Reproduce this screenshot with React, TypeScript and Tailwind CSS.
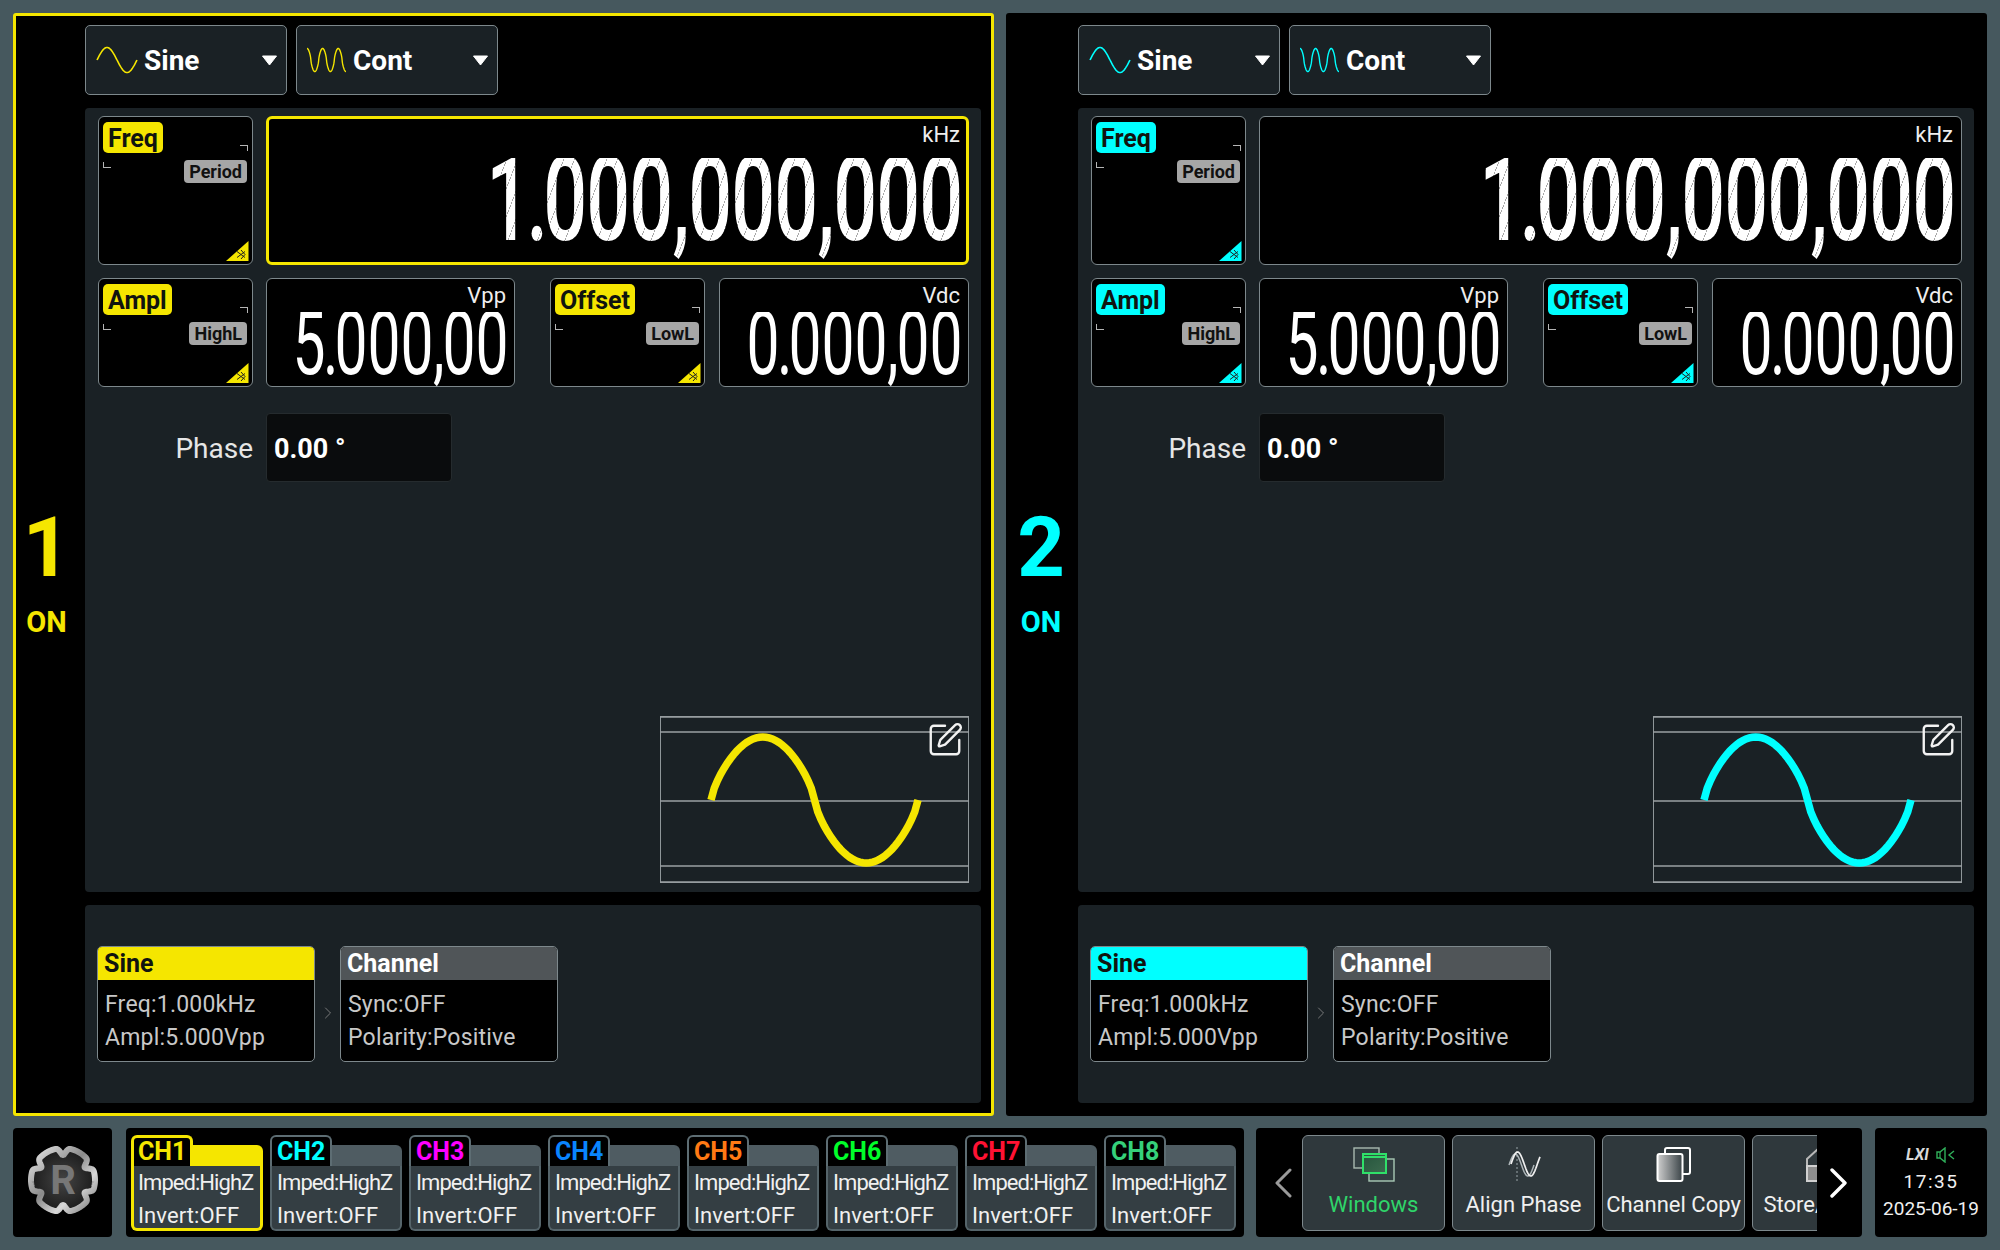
import { SquarePen, ChevronRight } from 'lucide-react'

const yellow = {
  hex: '#f5e600',
  text: 'text-[#f5e600]',
  bg: 'bg-[#f5e600]',
  panel: 'border-[#f5e600]',
  rail: 'pr-[8px]',
  active: 'border-[3px] border-[#f5e600] pt-[3px] pr-[3px]',
}
const cyan = {
  hex: '#00ffff',
  text: 'text-[#00ffff]',
  bg: 'bg-[#00ffff]',
  panel: 'border-black',
  rail: 'pr-[5px]',
  active: 'border border-[#7d888c] pt-[5px] pr-[5px]',
}
type Tone = typeof yellow

const channels = [
  { name: 'CH1', text: 'text-[#f5e600]' },
  { name: 'CH2', text: 'text-[#00ffff]' },
  { name: 'CH3', text: 'text-[#ff00ff]' },
  { name: 'CH4', text: 'text-[#0a84ff]' },
  { name: 'CH5', text: 'text-[#ff7a14]' },
  { name: 'CH6', text: 'text-[#00ff2a]' },
  { name: 'CH7', text: 'text-[#ff1233]' },
  { name: 'CH8', text: 'text-[#35d07a]' },
]

// pow < 1 pushes the curve towards steeper flanks, like the instrument's drawn wave
function sinePath(x0: number, w: number, cy: number, amp: number, cycles = 1, phase = 0, pow = 1) {
  const pts: string[] = []
  const n = Math.round(64 * cycles)
  for (let i = 0; i <= n; i++) {
    const t = i / n
    const s = Math.sin(t * cycles * Math.PI * 2 + phase)
    const y = cy - amp * Math.sign(s) * Math.pow(Math.abs(s), pow)
    pts.push(`${(x0 + t * w).toFixed(2)} ${y.toFixed(2)}`)
  }
  return 'M' + pts.join('L')
}

function Caret() {
  return (
    <svg width="17" height="11" viewBox="0 0 17 11" className="shrink-0">
      <path d="M1.5 1 H15.5 L8.5 10 Z" fill="#fff" stroke="#fff" strokeLinejoin="round" />
    </svg>
  )
}

function Dropdown({ label, tone, cont }: { label: string; tone: Tone; cont?: boolean }) {
  return (
    <div className={`w-[202px] h-[70px] rounded-[5px] border border-[#7d888c] bg-[#1a2125] flex items-center pr-[8px] ${cont ? 'pl-[9px]' : 'pl-[10px]'}`}>
      <svg width="42" height="28" viewBox="0 0 42 28" className="shrink-0">
        <path
          d={cont ? sinePath(1, 39, 14, 11.5, 2.5, Math.PI / 2, 0.7) : sinePath(1, 40, 14, 12.5)}
          fill="none"
          stroke={tone.hex}
          strokeWidth={cont ? 1.4 : 1.6}
        />
      </svg>
      <span className={`pt-[2px] text-[28px] font-bold leading-none text-white ${cont ? 'ml-[5px]' : 'ml-[6px]'}`}>{label}</span>
      <span className="ml-auto"><Caret /></span>
    </div>
  )
}

function Glyphs({ text, big }: { text: string; big?: boolean }) {
  return (
    <div className="flex justify-end">
      {text.split('').map((ch, i) => {
        const narrow = ch === ',' || ch === '.'
        const cell = big ? (ch === ',' ? 'w-[16px]' : ch === '.' ? 'w-[14px]' : 'w-[43px]') : narrow ? 'w-[9px]' : 'w-[33px]'
        return (
          <span key={i} className={`flex justify-center items-start ${big ? 'h-[84px]' : 'h-[64px]'} ${cell}`}>
            <span
              className={`shrink-0 bg-clip-text text-transparent ${
                big
                  ? 'h-[110px] text-[117px] font-medium leading-[84px] scale-x-[0.66] bg-[repeating-linear-gradient(120deg,#ffffff_0,#ffffff_13px,#a8a8a8_13px,#a8a8a8_14px)]'
                  : 'h-[84px] text-[89px] font-normal leading-[64px] scale-x-[0.66] bg-[repeating-linear-gradient(90deg,#ffffff_0,#ffffff_22px,#b0b0b0_22px,#b0b0b0_23px)]'
              }`}
            >
              {ch}
            </span>
          </span>
        )
      })}
    </div>
  )
}

function ParamBox({ tone, main, alt, className }: { tone: Tone; main: string; alt: string; className: string }) {
  return (
    <div className={`relative shrink-0 w-[155px] rounded-[6px] border border-[#7d888c] bg-black flex flex-col pt-[5px] pl-[4px] pr-[5px] ${className}`}>
      <span className={`self-start h-[31px] px-[5px] rounded-[5px] text-[25px] font-bold leading-[33px] text-[#10140f] ${tone.bg}`}>{main}</span>
      <span className="self-end mt-[7px] h-[23px] px-[5px] rounded-[4px] bg-[#a6a6a6] text-[18px] font-bold leading-[23px] text-[#111]">{alt}</span>
      <span className="absolute right-[4px] top-[28px] w-[8px] h-[6px] border-t border-r border-[#b5b5b5]" />
      <span className="absolute left-[4px] top-[45px] w-[8px] h-[6px] border-l border-b border-[#b5b5b5]" />
      <svg width="23" height="20" viewBox="0 0 23 20" className="absolute right-[3px] bottom-[3px]">
        <path d="M0 20 L22.5 0 V20 Z" fill={tone.hex} />
        <path d="M11 10.5 L19 16.5 M11 16.5 L19 10.5 M15 9 L19 13.5 L15 18" stroke="#222" strokeWidth="1" fill="none" />
      </svg>
    </div>
  )
}

function ValueBox({ value, unit, active, tone, big, className }: { value: string; unit: string; active?: boolean; tone: Tone; big?: boolean; className: string }) {
  return (
    <div
      className={`rounded-[6px] bg-black flex flex-col ${big ? (active ? tone.active : 'border border-[#7d888c] pt-[5px] pr-[5px]') : 'border border-[#7d888c] pt-[4px] pr-[5px]'} ${className}`}
    >
      <span className={`self-end mr-[3px] text-[22px] leading-[26px] text-[#eeeeee] ${big ? '' : 'mb-[3px]'}`}>{unit}</span>
      <div className={big ? 'mt-[10px]' : ''}>
        <Glyphs text={value} big={big} />
      </div>
    </div>
  )
}

function Preview({ tone }: { tone: Tone }) {
  return (
    <div className="relative self-end mt-auto mb-[9px] w-[309px] h-[167px]">
      <svg width="309" height="167" viewBox="0 0 309 167" className="block">
        <rect x="0.5" y="0.5" width="308" height="166" fill="none" stroke="#8e9699" strokeWidth="1" />
        <path d="M0 1H309 M0 16H309 M0 85H309 M0 150H309 M0 166H309" stroke="#9aa0a2" strokeWidth="1.6" />
        <path d={sinePath(51, 207, 84, 63, 1, 0, 0.72)} fill="none" stroke={tone.hex} strokeWidth="7.5" />
      </svg>
      <SquarePen size={38} strokeWidth={1.5} color="#f2f2f2" className="absolute right-[5px] top-[5px]" />
    </div>
  )
}

function ParamCard({ title, lines, tone, alt }: { title: string; lines: string[]; tone?: Tone; alt?: boolean }) {
  return (
    <div className="w-[218px] h-[116px] rounded-[5px] border border-[#7d888c] bg-black overflow-hidden">
      <div className={`h-[33px] px-[6px] text-[25px] font-bold leading-[33px] ${alt ? 'bg-[#505558] text-white' : `${tone?.bg} text-[#10140f]`}`}>{title}</div>
      <div className="pl-[7px] pt-[8px] text-[23px] leading-[33px] tracking-[0.2px] text-[#c8c8c8]">
        {lines.map((l) => (
          <div key={l}>{l}</div>
        ))}
      </div>
    </div>
  )
}

function ChannelPanel({ num, tone, active, className }: { num: string; tone: Tone; active?: boolean; className: string }) {
  return (
    <div className={`h-[1103px] bg-black rounded-[3px] border-[3px] flex ${tone.panel} ${className}`}>
      <div className={`w-[69px] shrink-0 flex flex-col items-center pt-[502px] ${tone.rail}`}>
        <span className={`text-[83px] font-bold leading-[60px] ${tone.text}`}>{num}</span>
        <span className={`mt-[34px] text-[29px] font-bold leading-[20px] ${tone.text}`}>ON</span>
      </div>
      <div className="flex-1 min-w-0 flex flex-col pt-[9px] pr-[10px] pb-[10px]">
        <div className="flex gap-[9px] h-[70px]">
          <Dropdown label="Sine" tone={tone} />
          <Dropdown label="Cont" tone={tone} cont />
        </div>
        <div className="mt-[13px] h-[784px] rounded-[4px] bg-[#1a2125] flex flex-col pt-[8px] pl-[13px] pr-[12px]">
          <div className="flex gap-[13px] h-[149px]">
            <ParamBox tone={tone} main="Freq" alt="Period" className="h-[149px]" />
            <ValueBox value="1.000,000,000" unit="kHz" active={active} tone={tone} big className="flex-1" />
          </div>
          <div className="mt-[13px] flex h-[109px]">
            <ParamBox tone={tone} main="Ampl" alt="HighL" className="h-[109px]" />
            <ValueBox value="5.000,00" unit="Vpp" tone={tone} className="ml-[13px] w-[249px]" />
            <ParamBox tone={tone} main="Offset" alt="LowL" className="ml-[35px] h-[109px]" />
            <ValueBox value="0.000,00" unit="Vdc" tone={tone} className="ml-[14px] flex-1" />
          </div>
          <div className="mt-[26px] flex items-center h-[69px]">
            <span className="w-[155px] pt-[3px] text-right text-[28px] text-[#e6e6e6]">Phase</span>
            <div className="ml-[13px] w-[186px] h-[69px] rounded-[4px] bg-[#0a0c0d] border border-[#252b2e] flex items-center pl-[7px] pt-[3px] text-[27px] font-bold text-white">
              0.00 °
            </div>
          </div>
          <Preview tone={tone} />
        </div>
        <div className="mt-[13px] flex-1 rounded-[4px] bg-[#1a2125] flex items-start pl-[12px] pt-[41px]">
          <ParamCard title="Sine" lines={['Freq:1.000kHz', 'Ampl:5.000Vpp']} tone={tone} />
          <span className="w-[25px] h-[116px] flex items-center justify-center pt-[18px]">
            <ChevronRight size={20} strokeWidth={1} color="#8a8a8a" />
          </span>
          <ParamCard title="Channel" lines={['Sync:OFF', 'Polarity:Positive']} alt />
        </div>
      </div>
    </div>
  )
}

function ChannelTab({ name, text, selected }: { name: string; text: string; selected?: boolean }) {
  return (
    <div className="w-[132px] h-[96px] flex flex-col shrink-0">
      <div className="h-[31px] flex">
        <div
          className={`w-[62px] h-[31px] rounded-t-[6px] bg-black border-b-0 text-[25px] font-bold leading-[28px] ${text} ${
            selected ? 'border-[3px] border-[#f5e600] pl-[4px]' : 'border-2 border-[#5d6d73] pl-[5px] pt-px'
          }`}
        >
          {name}
        </div>
        <div className={`flex-1 mt-[10px] rounded-tr-[6px] ${selected ? 'bg-[#f5e600]' : 'bg-[#4f5c62]'}`} />
      </div>
      <div
        className={`h-[65px] rounded-b-[6px] bg-[#343e43] text-[22px] leading-[33px] text-[#f0f0f0] ${
          selected ? 'border-x-[3px] border-b-[3px] border-[#f5e600] pl-[4px]' : 'border-x-2 border-b-2 border-[#55646a] pl-[5px]'
        }`}
      >
        <div className="tracking-[-0.95px]">Imped:HighZ</div>
        <div className="tracking-[0.1px]">Invert:OFF</div>
      </div>
    </div>
  )
}

function Logo() {
  const pts: string[] = []
  const cx = 50
  const cy = 52
  const steps = 240
  for (let i = 0; i < steps; i++) {
    const a = (i / steps) * Math.PI * 2
    // six lobes, notches at 0, 60, 120... degrees
    const r = 32 - 7 * Math.pow(Math.max(0, Math.cos(a * 6)), 3)
    pts.push(`${(cx + r * Math.sin(a)).toFixed(2)} ${(cy - r * Math.cos(a)).toFixed(2)}`)
  }
  return (
    <svg width="99" height="109" viewBox="0 0 99 109">
      <defs>
        <linearGradient id="metal" x1="0" y1="0" x2="1" y2="1">
          <stop offset="0" stopColor="#e8e8e8" />
          <stop offset="0.45" stopColor="#8a8a8a" />
          <stop offset="0.7" stopColor="#d8d8d8" />
          <stop offset="1" stopColor="#777" />
        </linearGradient>
        <radialGradient id="core" cx="0.5" cy="0.5" r="0.6">
          <stop offset="0" stopColor="#444" />
          <stop offset="1" stopColor="#141414" />
        </radialGradient>
      </defs>
      <path d={'M' + pts.join('L') + 'Z'} fill="url(#core)" stroke="url(#metal)" strokeWidth="6" strokeLinejoin="round" />
      <text x="50" y="66" textAnchor="middle" fontFamily="Roboto" fontSize="40" fontWeight="700" fill="#777">R</text>
    </svg>
  )
}

function WindowsIcon() {
  return (
    <svg width="42" height="36" viewBox="0 0 42 36">
      <defs>
        <linearGradient id="win" x1="0" y1="0" x2="1" y2="1">
          <stop offset="0" stopColor="#26543c" />
          <stop offset="1" stopColor="#3c6b4f" />
        </linearGradient>
      </defs>
      <rect x="1" y="1" width="25" height="20" fill="#333f42" stroke="#a9b9b0" strokeWidth="1.4" />
      <rect x="16" y="12" width="25" height="22" fill="#333f42" stroke="#a9c9b5" strokeWidth="1.4" />
      <rect x="10" y="7" width="23" height="19" fill="url(#win)" stroke="#2fe069" strokeWidth="2" />
      <path d="M10 10H33" stroke="#2fe069" strokeWidth="2" />
    </svg>
  )
}

function PhaseIcon() {
  return (
    <svg width="36" height="36" viewBox="0 0 36 36">
      <path d="M11 0V36" stroke="#9aa4a8" strokeWidth="1" strokeDasharray="2 2" />
      <path d={sinePath(3, 25, 18, 11, 1)} fill="none" stroke="#aeb6b9" strokeWidth="1.5" />
      <path d={sinePath(5, 29, 17, 12, 1.1)} fill="none" stroke="#f0f0f0" strokeWidth="1.7" />
    </svg>
  )
}

function CopyIcon() {
  return (
    <svg width="36" height="36" viewBox="0 0 36 36">
      <defs>
        <linearGradient id="copy" x1="0" y1="0" x2="1" y2="0">
          <stop offset="0" stopColor="#cfcfcf" />
          <stop offset="1" stopColor="#3a4347" />
        </linearGradient>
      </defs>
      <rect x="9" y="1" width="25" height="26" rx="2" fill="#2f383c" stroke="#fff" strokeWidth="2" />
      <rect x="1.5" y="7" width="25" height="27" rx="2" fill="url(#copy)" stroke="#fff" strokeWidth="2" />
    </svg>
  )
}

function StoreIcon() {
  return (
    <svg width="36" height="36" viewBox="0 0 36 36">
      <path d="M1 34V12L13 1H24L35 12V34Z" fill="#2f383c" stroke="#b8b8b8" strokeWidth="2" />
      <path d="M1 19H35V34H1Z" fill="#8d8d8d" stroke="#d0d0d0" strokeWidth="2" />
    </svg>
  )
}

function ToolButton({ label, icon, green }: { label: string; icon: React.ReactNode; green?: boolean }) {
  return (
    <div className="w-[143px] h-[96px] shrink-0 rounded-[6px] border border-[#7d888c] bg-[#2f383c] flex flex-col items-center pt-[11px]">
      <div className="h-[36px] flex items-center justify-center">{icon}</div>
      <span className={`mt-[9px] text-[22px] leading-[26px] whitespace-nowrap ${green ? 'text-[#2fd56a]' : 'text-[#f0f0f0]'}`}>{label}</span>
    </div>
  )
}

export default function App() {
  return (
    <div className="w-[2000px] h-[1250px] overflow-hidden bg-[#46585e] p-[13px] font-['Roboto',sans-serif]">
      <div className="flex gap-[12px]">
        <ChannelPanel num="1" tone={yellow} active className="w-[981px] shrink-0" />
        <ChannelPanel num="2" tone={cyan} className="flex-1 min-w-0" />
      </div>

      <div className="mt-[12px] flex h-[109px]">
        <div className="w-[99px] rounded-[4px] bg-black">
          <Logo />
        </div>
        <div className="ml-[14px] w-[1118px] rounded-[4px] bg-black flex gap-[7px] pl-[5px] pt-[7px]">
          {channels.map((c, i) => (
            <ChannelTab key={c.name} name={c.name} text={c.text} selected={i === 0} />
          ))}
        </div>
        <div className="ml-[12px] w-[606px] rounded-[4px] bg-black flex items-center">
          <div className="w-[46px] flex justify-center pl-[8px]">
            <svg width="18" height="30" viewBox="0 0 18 30">
              <path d="M16 2 L3 15 L16 28" fill="none" stroke="#9a9a9a" strokeWidth="3" strokeLinecap="round" strokeLinejoin="round" />
            </svg>
          </div>
          <div className="w-[515px] overflow-hidden flex gap-[7px]">
            <ToolButton label="Windows" icon={<WindowsIcon />} green />
            <ToolButton label="Align Phase" icon={<PhaseIcon />} />
            <ToolButton label="Channel Copy" icon={<CopyIcon />} />
            <ToolButton label="Store/Recall" icon={<StoreIcon />} />
          </div>
          <div className="flex-1 flex justify-center pr-[2px]">
            <svg width="18" height="30" viewBox="0 0 18 30">
              <path d="M2 2 L15 15 L2 28" fill="none" stroke="#fff" strokeWidth="3.4" strokeLinecap="round" strokeLinejoin="round" />
            </svg>
          </div>
        </div>
        <div className="ml-[13px] w-[112px] rounded-[4px] bg-black flex flex-col items-center pt-[17px] text-[#f0f0f0]">
          <div className="flex items-center h-[20px] gap-[7px]">
            <span className="text-[16px] font-bold italic leading-none text-[#d8d8d8]">LXI</span>
            <svg width="20" height="16" viewBox="0 0 20 16">
              <path d="M1 5 H4 L9 1 V15 L4 11 H1 Z" fill="none" stroke="#2fb05a" strokeWidth="1.4" />
              <path d="M4 5 V11" stroke="#2fb05a" strokeWidth="1.2" />
              <path d="M18 4 L13 8 L18 12" fill="none" stroke="#2fb05a" strokeWidth="1.4" />
            </svg>
          </div>
          <span className="mt-[4px] text-[19px] leading-[26px] tracking-[1.5px]">17:35</span>
          <span className="mt-px text-[19px] leading-[26px]">2025-06-19</span>
        </div>
      </div>
    </div>
  )
}
